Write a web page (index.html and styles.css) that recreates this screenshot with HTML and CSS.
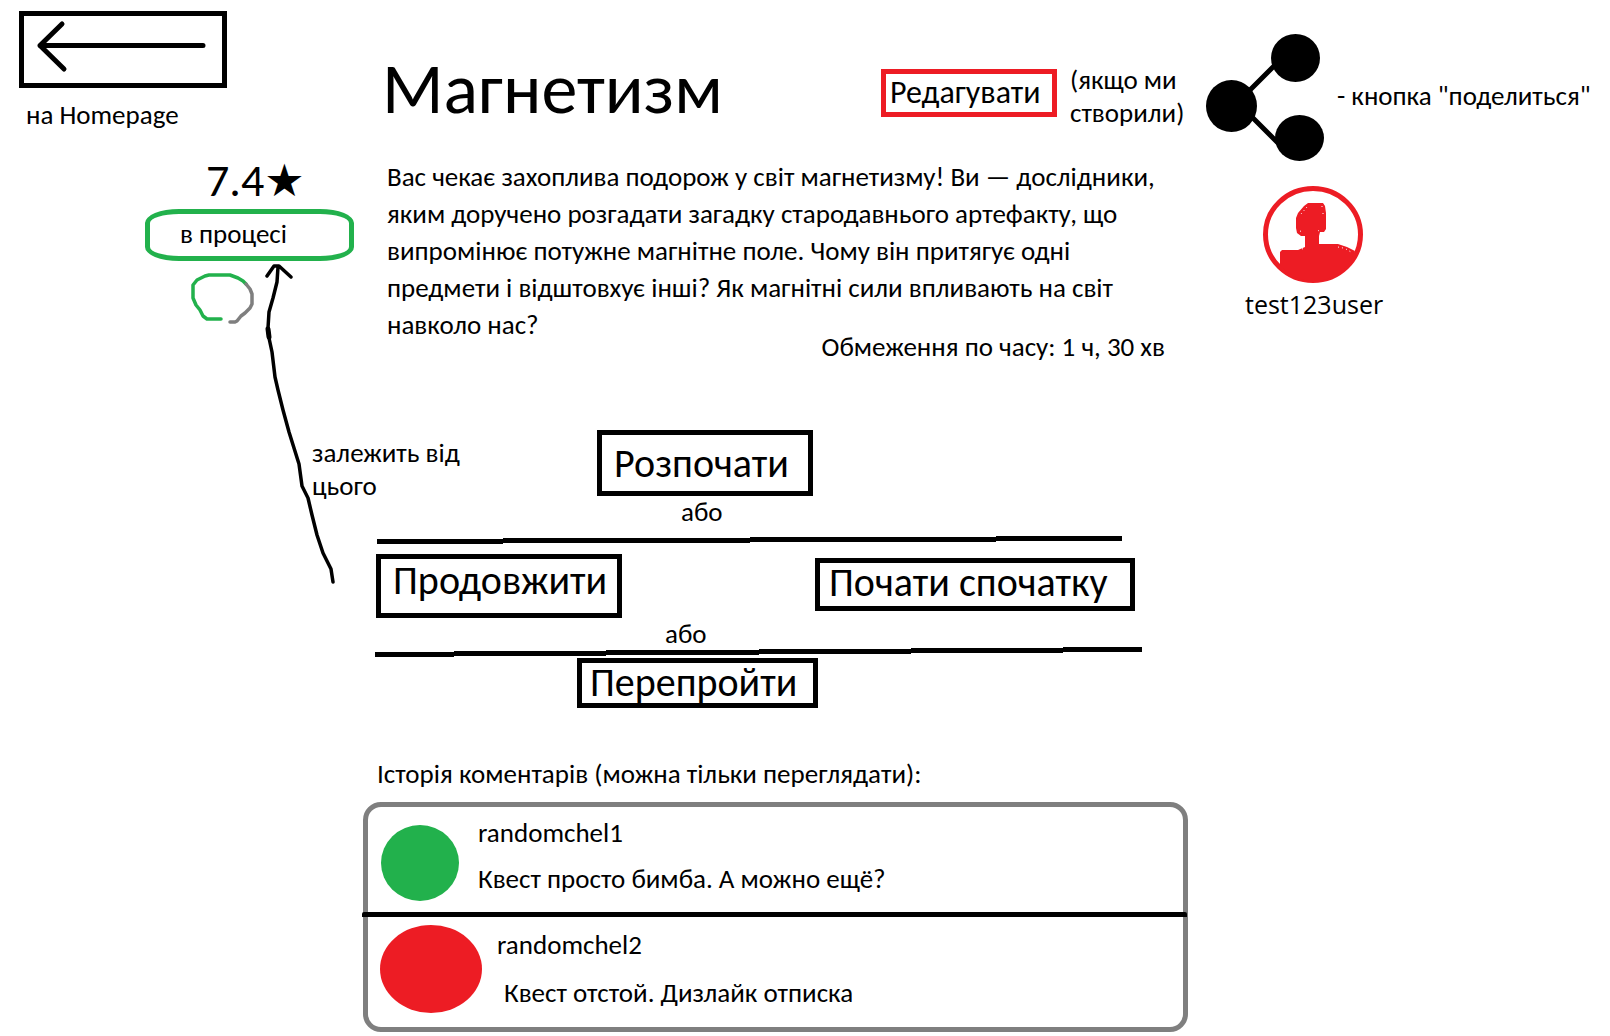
FILE: index.html
```html
<!DOCTYPE html>
<html lang="uk">
<head>
<meta charset="utf-8">
<meta name="viewport" content="width=device-width, initial-scale=1">
<title>Магнетизм</title>
<link rel="stylesheet" href="styles.css">
</head>
<body>
<div class="page">
  <aside class="side">
    <a class="back" href="#home" aria-label="на Homepage">
      <svg width="198" height="67" viewBox="0 0 198 67" fill="none" stroke="#000" stroke-width="5" stroke-linecap="round" stroke-linejoin="round"><path d="M179 29.500H16M38 8L16 29.500L40 53"/></svg>
    </a>
    <p class="back-note">на Homepage</p>
    <p class="rating">7.4<span class="star">★</span></p>
    <p class="status">в процесі</p>
    <svg class="progress" width="64" height="51" viewBox="0 0 64 51" fill="none" stroke-width="3.500" stroke-linecap="round" stroke-linejoin="round">
      <path stroke="#22b14c" d="M30 46H16L12 43L9 37L5 32L2 25V12L6 7L14 3L18 2H39L47 5L52 8L55 11"/>
      <path stroke="#7f7f7f" d="M55 11L59 16L61 21V31L59 35L54 40L50 43L46 48L44 49H39"/>
    </svg>
    <p class="depends">залежить від цього</p>
    <svg class="pointer" width="75" height="325" viewBox="0 0 75 325" fill="none" stroke="#000" stroke-width="3.500" stroke-linecap="round" stroke-linejoin="round" aria-hidden="true">
      <path d="M70 322L68 309L60 293L54 275L49 255L45 238L39 226L36 204L31 188L26 172L20 150L15 130L12 117L9 92L6 78L5 68L6 52L10 38L14 22L15 7M4 16L11 6H16L28 17"/>
      <path stroke-width="5" d="M5 69L6 77"/>
    </svg>
  </aside>

  <main class="main">
    <header class="head">
      <h1 class="title">Магнетизм</h1>
      <button class="box edit" type="button">Редагувати</button>
      <p class="edit-note">(якщо ми створили)</p>
    </header>
    <p class="about">Вас чекає захоплива подорож у світ магнетизму! Ви — дослідники, яким доручено розгадати загадку стародавнього артефакту, що випромінює потужне магнітне поле. Чому він притягує одні предмети і відштовхує інші? Як магнітні сили впливають на світ навколо нас?</p>
    <p class="limit">Обмеження по часу: 1 ч, 30 хв</p>

    <section class="actions">
      <button class="box start" type="button">Розпочати</button>
      <p class="or or-first">або</p>
      <svg class="rule rule-first" viewBox="0 0 745 8" preserveAspectRatio="none" fill="none" stroke="#000" stroke-width="5"><path d="M0 5.500H126M126 4.500H373M373 3.500H619M619 2.500H745"/></svg>
      <div class="pair">
        <button class="box resume" type="button">Продовжити</button>
        <button class="box restart" type="button">Почати спочатку</button>
      </div>
      <p class="or or-second">або</p>
      <svg class="rule rule-second" viewBox="0 0 767 10" preserveAspectRatio="none" fill="none" stroke="#000" stroke-width="5"><path d="M0 7.500H79M79 6.500H231M231 5.500H384M384 4.500H536M536 3.500H688M688 2.500H767"/></svg>
      <button class="box replay" type="button">Перепройти</button>
    </section>

    <section>
      <h2 class="history">Історія коментарів (можна тільки переглядати):</h2>
      <ul class="comments">
        <li class="comment">
          <span class="face face-green"></span>
          <div class="words">
            <p>randomchel1</p>
            <p>Квест просто бимба. А можно ещё?</p>
          </div>
        </li>
        <li class="comment comment-next">
          <span class="face face-red"></span>
          <div class="words words-next">
            <p>randomchel2</p>
            <p class="reply">Квест отстой. Дизлайк отписка</p>
          </div>
        </li>
      </ul>
    </section>
  </main>

  <aside class="extra">
    <div class="share">
      <button class="share-button" type="button" aria-label="поделиться">
        <svg width="118" height="127" viewBox="0 0 118 127"><path d="M44 56L70 30M44 81L74 111" stroke="#000" stroke-width="5"/><ellipse cx="25.500" cy="72" rx="25.500" ry="26"/><ellipse cx="89.500" cy="24" rx="24.500" ry="24"/><ellipse cx="93.500" cy="104" rx="24.500" ry="23"/></svg>
      </button>
      <p class="share-note">- кнопка "поделиться"</p>
    </div>
    <svg class="avatar" width="100" height="97" viewBox="0 0 100 97" fill="#ed1c24"><ellipse cx="50" cy="48.500" rx="47.500" ry="46" fill="none" stroke="#ed1c24" stroke-width="5"/><path d="M45 17H60L62 20L63 27V43L61 46H57L56 50V58H75L84 61L92 65C87 80 73 95 50 95C36 95 24 87 17 79V66L19 64H35L42 61V50H38L34 47L33 42V32L35 27L41 20Z"/><path d="M38 28L44 21M59 20V22M60 27V29M37 45L40 46M55 45L58 43M39 63L42 62M75 61L80 62M83 63L88 66" stroke="#fff" stroke-width="1" stroke-dasharray="1 3" fill="none"/></svg>
    <p class="user">test123user</p>
  </aside>
</div>
</body>
</html>
```
FILE: styles.css
```css
* {
  box-sizing: border-box;
}

body {
  margin: 0;
  background: #fff;
  color: #000;
  font: 27px/33px Carlito, Calibri, Lato, sans-serif;
}

p,
h1,
h2,
ul {
  margin: 0;
  padding: 0;
  font-weight: 400;
}

svg {
  display: block;
}

.page {
  display: grid;
  grid-template-columns: 344px minmax(0, 826px) minmax(402px, 1fr);
  padding: 11px 19px 4px;
}

/* Left column */
.side {
  position: relative;
}

.back {
  display: block;
  width: 208px;
  border: 5px solid #000;
}

.back-note {
  margin: 10px 0 0 7px;
}

.rating {
  margin: 21px 0 1px 187px;
  font-size: 46px;
  line-height: 56px;
}

.star {
  font-family: "DejaVu Sans", sans-serif;
  font-size: 45px;
  line-height: 1px;
}

.status {
  width: 209px;
  margin-left: 126px;
  padding: 3px 0 6px 30px;
  border: 5px solid #22b14c;
  border-radius: 34px / 14px;
}

.progress {
  margin: 12px 0 0 172px;
}

.depends {
  width: 160px;
  margin: 112px 0 0 293px;
}

.pointer {
  position: absolute;
  top: 249px;
  left: 244px;
}

/* Quest */
.head {
  display: flex;
  align-items: flex-start;
  padding: 33px 0 0 19px;
}

.title {
  flex: 1;
  font-size: 72px;
  line-height: 88px;
}

.box {
  display: block;
  border: 5px solid #000;
  border-radius: 0;
  background: #fff;
  color: #000;
  font: inherit;
  font-size: 40px;
  line-height: 40px;
  text-align: left;
  white-space: nowrap;
}

.edit {
  width: 176px;
  margin-top: 25px;
  padding: 0 4px;
  border-color: #ed1c24;
  font-size: 32px;
  line-height: 38px;
}

.edit-note {
  width: 119px;
  margin: 19px 0 0 13px;
}

.about {
  margin-top: 26px;
  padding: 0 20px 0 24px;
  line-height: 37px;
}

.limit {
  margin-top: -13px;
  padding-right: 24px;
  text-align: right;
}

.actions {
  margin-top: 67px;
}

.start {
  width: 216px;
  margin-left: 234px;
  padding: 9px 12px 7px;
}

.or-first {
  margin: -1px 0 0 318px;
}

.or-second {
  margin: -1px 0 0 302px;
}

.rule {
  overflow: visible;
}

.rule-first {
  width: calc(100% - 81px);
  height: 8px;
  margin: 8px 0 10px 14px;
}

.rule-second {
  width: calc(100% - 59px);
  height: 10px;
  margin: -3px 0 1px 12px;
}

.pair {
  display: flex;
  align-items: flex-start;
  justify-content: space-between;
  padding: 0 54px 0 13px;
}

.resume {
  width: 246px;
  padding: 2px 12px 12px;
}

.restart {
  width: 320px;
  margin-top: 4px;
  padding: 0 9px 3px;
}

.replay {
  width: 241px;
  margin-left: 214px;
  padding: 0 8px;
}

/* Comments */
.history {
  margin: 49px 0 12px 14px;
  font-size: 27px;
}

.comments {
  margin-right: 1px;
  border: 5px solid #7f7f7f;
  border-radius: 18px;
  list-style: none;
}

.comment {
  display: flex;
  gap: 19px;
  height: 105px;
  padding: 9px 13px 0;
}

.comment-next {
  gap: 15px;
  height: 115px;
  margin: 0 -4px 0 -6px;
  padding: 8px 18px 0;
  border-top: 5px solid #000;
  border-radius: 2px;
}

.face {
  flex: none;
  border-radius: 50%;
}

.face-green {
  width: 78px;
  height: 76px;
  margin-top: 9px;
  background: #22b14c;
}

.face-red {
  width: 102px;
  height: 88px;
  background: #ed1c24;
}

.words {
  display: grid;
  align-content: start;
  gap: 13px;
}

.words-next {
  gap: 15px;
  padding-top: 3px;
}

.reply {
  padding-left: 7px;
}

/* Right column */
.extra {
  padding: 23px 0 0 17px;
}

.share {
  display: flex;
  align-items: center;
  gap: 13px;
}

.share-button {
  padding: 0;
  border: 0;
  background: none;
}

.share-note {
  padding-bottom: 4px;
  white-space: nowrap;
}

.avatar {
  margin: 25px 0 5px 57px;
}

.user {
  margin-left: 39px;
  font-family: "Open Sans", "Noto Sans", sans-serif;
  font-size: 25px;
}
```
